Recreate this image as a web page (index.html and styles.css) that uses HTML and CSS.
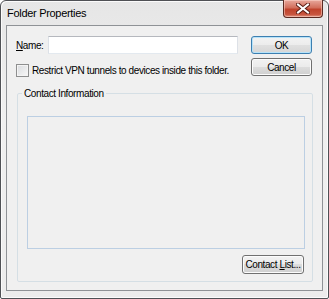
FILE: index.html
```html
<!DOCTYPE html>
<html lang="en">
<head>
    <meta charset="UTF-8">
    <title>Folder Properties</title>
    <link rel="stylesheet" href="styles.css">
</head>
<body>
    <div class="window">
        <div class="titlebar">
            <span class="title">Folder Properties</span>
            <button class="close" aria-label="Close">
                <svg width="14" height="11" viewBox="0 0 14 11">
                    <!-- dark outline under the white cross -->
                    <path d="M2 1.5 L12 9.5 M12 1.5 L2 9.5" stroke="#5a1c14" stroke-width="4" stroke-linecap="square"/>
                    <path d="M2 1.5 L12 9.5 M12 1.5 L2 9.5" stroke="#ffffff" stroke-width="2" stroke-linecap="square"/>
                </svg>
            </button>
        </div>

        <div class="client">
            <div class="top">
                <div class="fields">
                    <div class="name-row">
                        <label class="label" for="name"><u>N</u>ame:</label>
                        <input class="text-input" id="name" type="text">
                    </div>
                    <label class="check-row">
                        <span class="checkbox"></span>
                        <span>Restrict VPN tunnels to devices inside this folder.</span>
                    </label>
                </div>
                <div class="actions">
                    <button class="btn btn-default">OK</button>
                    <button class="btn">Cancel</button>
                </div>
            </div>

            <fieldset class="group">
                <legend class="group-title">Contact Information</legend>
                <div class="contact-box"></div>
                <div class="group-footer">
                    <button class="btn btn-wide">Contact <u>L</u>ist...</button>
                </div>
            </fieldset>
        </div>
    </div>
</body>
</html>
```

FILE: styles.css
```css
body {
    margin: 0;
    padding: 0;
    background-color: #ffffff;
    font-family: 'Liberation Sans', Arial, sans-serif;
    font-size: 10px;
    letter-spacing: -0.4px;
    color: #000000;
}

.window {
    width: 329px;
    height: 299px;
    box-sizing: border-box;
    border: 1px solid #4f5155;
    border-radius: 6px 6px 2px 2px;
    background: linear-gradient(#e6e6e6, #f0f0f0 40%, #ececec);
    box-shadow: inset 1px 1px 0 #fbfbfb, inset -1px -1px 0 #fbfbfb;
    padding: 0 5px 7px 5px;
    display: flex;
    flex-direction: column;
}

.titlebar {
    height: 24px;
    display: flex;
    align-items: center;
    justify-content: space-between;
}

.title {
    padding-left: 1px;
    font-size: 11px;
    letter-spacing: -0.3px;
    color: #000000;
}

.close {
    align-self: flex-start;
    margin-top: -1px;
    width: 40px;
    height: 18px;
    padding: 0;
    border: 1px solid #5b2a22;
    border-top: none;
    border-radius: 0 0 4px 4px;
    background: linear-gradient(#e8a89c, #d26f5c 45%, #c0432c 55%, #c8553f 85%, #e29a88);
    box-shadow: inset 0 0 0 1px rgba(255, 220, 210, 0.5);
    display: flex;
    align-items: center;
    justify-content: center;
}

.client {
    flex: 1;
    border: 1px solid #8f9296;
    background-color: #f0f0f0;
    padding: 10px 9px 8px 9px;
    display: flex;
    flex-direction: column;
}

.top {
    display: flex;
    gap: 13px;
    padding-right: 1px;
}

.fields {
    width: 222px;
    white-space: nowrap;
}

.name-row {
    display: flex;
    align-items: center;
    height: 18px;
}

.label {
    width: 32px;
}

.text-input {
    width: 190px;
    height: 18px;
    box-sizing: border-box;
    margin: 0;
    border: 1px solid;
    border-color: #b5b8be #dde1e7 #e3e9ef #dde1e7;
    background-color: #ffffff;
}

.check-row {
    display: flex;
    align-items: center;
    gap: 3px;
    margin-top: 10px;
    height: 13px;
}

.checkbox {
    flex: none;
    width: 13px;
    height: 13px;
    box-sizing: border-box;
    border: 1px solid #8e8f8f;
    background: linear-gradient(135deg, #d9dbde, #f8f8f8);
    box-shadow: inset 0 0 0 1px #f4f4f4;
}

.actions {
    display: flex;
    flex-direction: column;
    gap: 4px;
}

.btn {
    width: 61px;
    height: 18px;
    box-sizing: border-box;
    padding: 0;
    border: 1px solid #707070;
    border-radius: 3px;
    background: linear-gradient(#f2f2f2, #ebebeb 50%, #dddddd 50%, #cfcfcf);
    box-shadow: inset 0 0 0 1px #fcfcfc;
    font-family: inherit;
    font-size: 10px;
    letter-spacing: -0.4px;
    white-space: nowrap;
    color: #000000;
}

.btn-default {
    border-color: #3c7fb1;
    box-shadow: inset 0 0 0 1px #b7e3f9;
    background: linear-gradient(#f3f3f3, #ececec 50%, #e0e0e0 50%, #d6d6d6);
}

.btn-wide {
    width: 62px;
    height: 19px;
}

.group {
    flex: 1;
    margin: 10px 0 0 1px;
    padding: 0 0 7px 0;
    border: 1px solid #d5dfe5;
    border-radius: 2px;
    display: flex;
    flex-direction: column;
    min-width: 0;
}

.group-title {
    margin-left: 4px;
    padding: 0 2px;
    line-height: 13px;
}

.contact-box {
    flex: 1;
    margin: 16px 7px 0 9px;
    border: 1px solid #bccfe3;
    background-color: #f0f0f0;
}

.group-footer {
    display: flex;
    justify-content: flex-end;
    margin-top: 6px;
    padding-right: 8px;
}
```
